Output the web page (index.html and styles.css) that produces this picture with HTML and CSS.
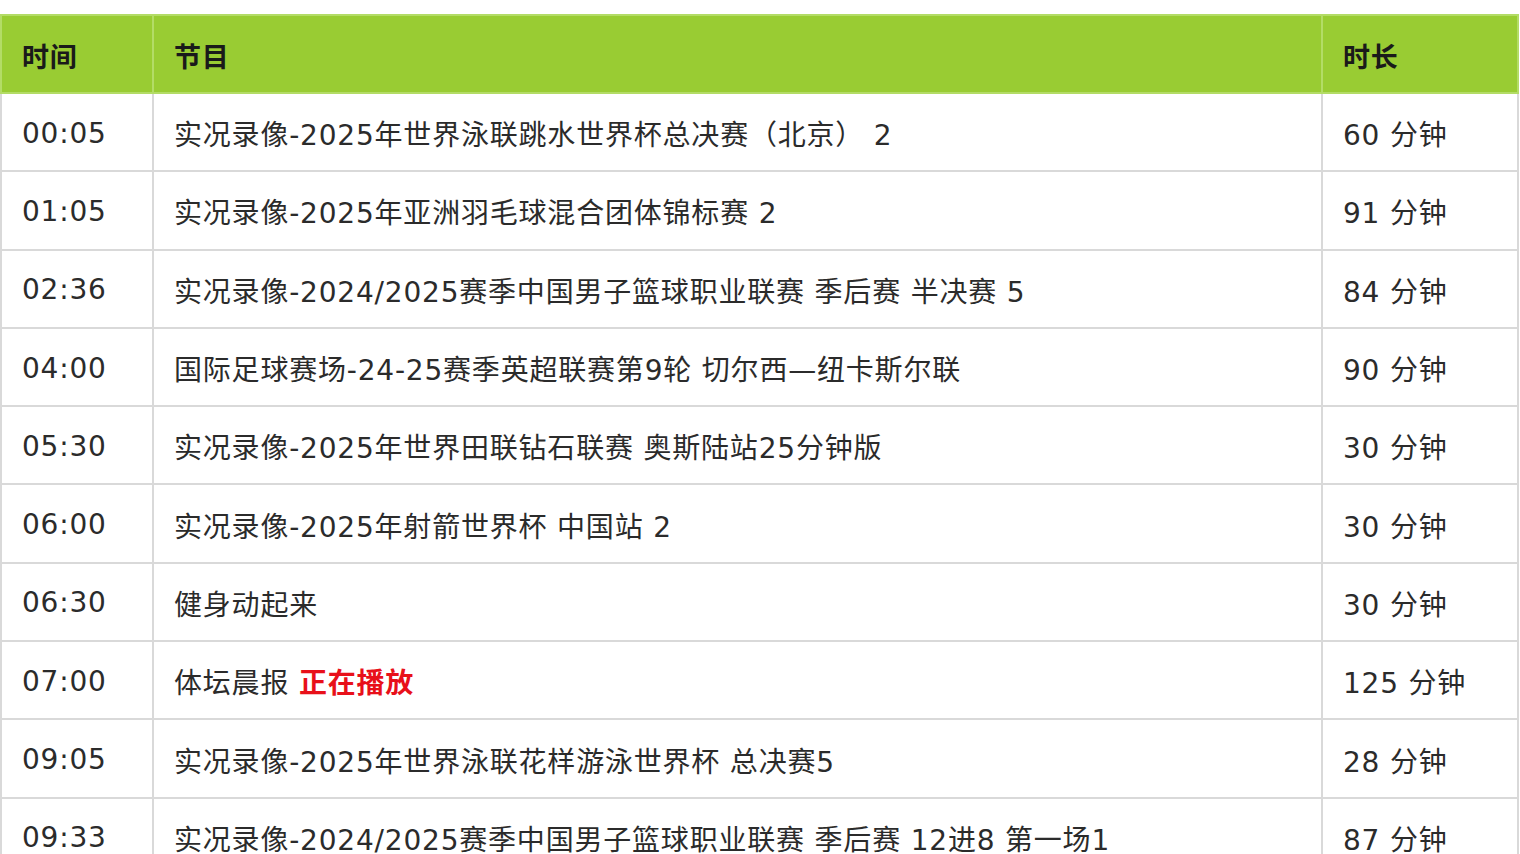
FILE: index.html
```html
<!DOCTYPE html>
<html lang="zh-CN">
<head>
<meta charset="utf-8">
<title>节目表</title>
<link rel="stylesheet" href="styles.css">
</head>
<body>
<table class="schedule">
  <colgroup>
    <col class="c-time">
    <col class="c-prog">
    <col class="c-dur">
  </colgroup>
  <thead>
    <tr><th>时间</th><th>节目</th><th>时长</th></tr>
  </thead>
  <tbody>
    <tr><td>00:05</td><td>实况录像-2025年世界泳联跳水世界杯总决赛（北京） 2</td><td>60 分钟</td></tr>
    <tr><td>01:05</td><td>实况录像-2025年亚洲羽毛球混合团体锦标赛 2</td><td>91 分钟</td></tr>
    <tr><td>02:36</td><td>实况录像-2024/2025赛季中国男子篮球职业联赛 季后赛 半决赛 5</td><td>84 分钟</td></tr>
    <tr><td>04:00</td><td>国际足球赛场-24-25赛季英超联赛第9轮 切尔西—纽卡斯尔联</td><td>90 分钟</td></tr>
    <tr><td>05:30</td><td>实况录像-2025年世界田联钻石联赛 奥斯陆站25分钟版</td><td>30 分钟</td></tr>
    <tr><td>06:00</td><td>实况录像-2025年射箭世界杯 中国站 2</td><td>30 分钟</td></tr>
    <tr><td>06:30</td><td>健身动起来</td><td>30 分钟</td></tr>
    <tr><td>07:00</td><td>体坛晨报 <span class="live">正在播放</span></td><td>125 分钟</td></tr>
    <tr><td>09:05</td><td>实况录像-2025年世界泳联花样游泳世界杯 总决赛5</td><td>28 分钟</td></tr>
    <tr><td>09:33</td><td>实况录像-2024/2025赛季中国男子篮球职业联赛 季后赛 12进8 第一场1</td><td>87 分钟</td></tr>
  </tbody>
</table>
</body>
</html>
```

FILE: styles.css
```css
html, body {
  margin: 0;
  padding: 0;
  background: #fff;
}
body {
  padding-top: 14px;
  font-family: "DejaVu Sans", "Noto Sans CJK SC", sans-serif;
  font-size: 28px;
  letter-spacing: 0.8px;
  color: #2b2b2b;
  overflow: hidden;
}
.schedule {
  width: 1519px;
  border-collapse: collapse;
  table-layout: fixed;
}
.c-time { width: 152px; }
.c-dur { width: 196px; }
.schedule th,
.schedule td {
  padding: 2px 0 0 20px;
  box-sizing: border-box;
  text-align: left;
  vertical-align: middle;
  border: 2px solid #d9d9d9;
  white-space: nowrap;
  overflow: hidden;
}
.schedule td { height: 78.3px; }
.schedule th {
  height: 78px;
  background: #99cc33;
  border-color: #b3dc66;
  color: #1a1a1a;
  font-weight: bold;
  font-size: 27px;
}
.live {
  color: #e8101a;
  font-weight: bold;
}
```
